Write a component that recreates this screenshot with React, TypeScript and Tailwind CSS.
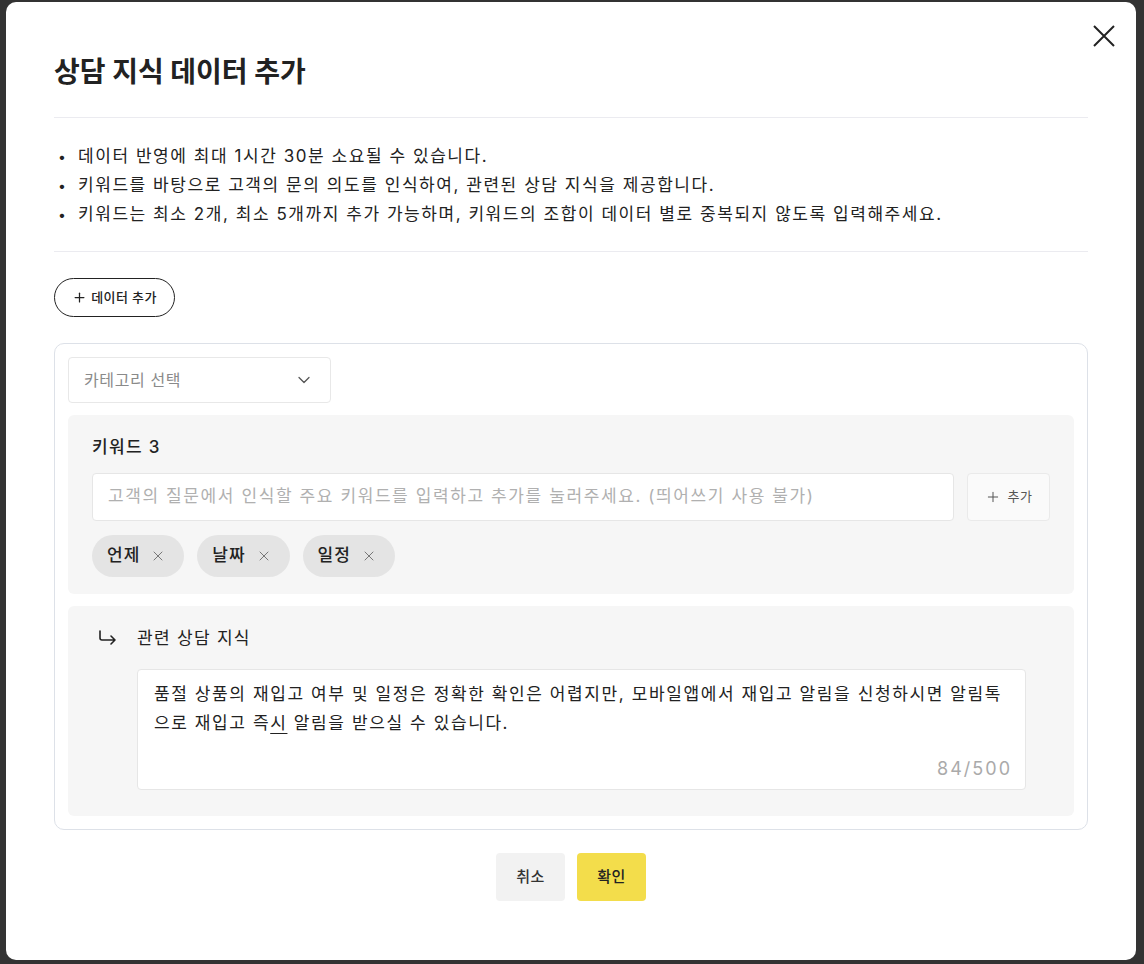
import { Plus, ChevronDown, X } from "lucide-react";

const font = { fontFamily: "Inter, 'Noto Sans CJK KR', sans-serif" };

export default function App() {
  const keywords = ["언제", "날짜", "일정"];

  return (
    <div className="w-[1144px] h-[964px] bg-[#333333] pt-[2px] pl-[6px] overflow-hidden" style={font}>
      <div className="relative w-[1130px] h-[958px] bg-white rounded-[10px] px-[48px] text-[#222222]">
        {/* close */}
        <button className="absolute top-[23px] right-[21px] w-[22px] h-[22px]">
          <svg viewBox="0 0 22 22" className="w-[22px] h-[22px]">
            <path d="M1 1 L21 21 M21 1 L1 21" stroke="#222" strokeWidth="2" fill="none" />
          </svg>
        </button>

        {/* header */}
        <h1 className="pt-[53px] text-[28px] leading-[34px] font-bold">
          상담 지식 데이터 추가
        </h1>
        <div className="mt-[28px] h-px bg-[#ebebf0]" />

        {/* notice */}
        <ul className="mt-[24px] text-[17px] leading-[29px] tracking-[1.55px] text-[#222]">
          <li className="flex">
            <span className="w-[24px] pl-[4px] text-[14px] tracking-normal">•</span>
            데이터 반영에 최대 1시간 30분 소요될 수 있습니다.
          </li>
          <li className="flex">
            <span className="w-[24px] pl-[4px] text-[14px] tracking-normal">•</span>
            키워드를 바탕으로 고객의 문의 의도를 인식하여, 관련된 상담 지식을 제공합니다.
          </li>
          <li className="flex">
            <span className="w-[24px] pl-[4px] text-[14px] tracking-normal">•</span>
            키워드는 최소 2개, 최소 5개까지 추가 가능하며, 키워드의 조합이 데이터 별로 중복되지 않도록 입력해주세요.
          </li>
        </ul>
        <div className="mt-[22px] h-px bg-[#ebebf0]" />

        {/* add data */}
        <button className="mt-[26px] h-[39px] w-[121px] flex items-center justify-center gap-[4px] rounded-full border-[1.5px] border-[#222] text-[13px] tracking-[0.4px] font-medium">
          <Plus size={15} strokeWidth={2} />
          데이터 추가
        </button>

        {/* card */}
        <div className="mt-[26px] border border-[#dde1e8] rounded-[10px] p-[13px] flex flex-col gap-[12px]">
          <div className="w-[263px] h-[46px] border border-[#e8e8e8] rounded-[4px] flex items-center justify-between pl-[15px] pr-[16px]">
            <span className="text-[16px] tracking-[0.6px] text-[#8a8a8a]">카테고리 선택</span>
            <ChevronDown size={20} strokeWidth={1.5} className="text-[#555]" />
          </div>

          {/* keywords */}
          <div className="bg-[#f6f6f6] rounded-[6px] pt-[20px] pb-[17px] px-[24px]">
            <div className="text-[17px] leading-[24px] tracking-[1.3px] font-medium">키워드 3</div>
            <div className="mt-[14px] flex gap-[13px]">
              <div className="flex-1 h-[48px] bg-white border border-[#e6e6e6] rounded-[4px] flex items-center px-[15px] text-[17px] tracking-[1.6px] text-[#b0b0b0] whitespace-nowrap overflow-hidden">
                고객의 질문에서 인식할 주요 키워드를 입력하고 추가를 눌러주세요. (띄어쓰기 사용 불가)
              </div>
              <button className="w-[83px] h-[48px] bg-[#fafafa] border border-[#eaeaea] rounded-[4px] flex items-center justify-center gap-[7px] text-[13px] tracking-[0.5px] text-[#555]">
                <Plus size={16} strokeWidth={1.5} />
                추가
              </button>
            </div>
            <div className="mt-[14px] flex gap-[13px]">
              {keywords.map((k) => (
                <div
                  key={k}
                  className="h-[42px] pl-[15px] pr-[18px] rounded-full bg-[#e4e4e4] flex items-center gap-[10px] text-[17px] tracking-[1px] font-medium"
                >
                  {k}
                  <X size={16} strokeWidth={1.5} className="text-[#777]" />
                </div>
              ))}
            </div>
          </div>

          {/* related */}
          <div className="bg-[#f6f6f6] rounded-[6px] pt-[20px] pb-[26px] pl-[30px] pr-[48px]">
            <div className="flex items-center text-[17px] leading-[24px] tracking-[1.3px]">
              <svg viewBox="0 0 20 16" className="w-[20px] h-[16px] mr-[19px]">
                <path d="M2 1 V8 Q2 10 4 10 H17 M13 6 L17 10 L13 14" stroke="#222" strokeWidth="1.6" fill="none" strokeLinecap="round" strokeLinejoin="round" />
              </svg>
              관련 상담 지식
            </div>
            <div className="relative ml-[39px] mt-[19px] h-[121px] bg-white border border-[#e6e6e6] rounded-[4px] pl-[16px] pr-[10px] pt-[10px] text-[17px] leading-[29px] tracking-[1.6px] whitespace-nowrap">
              품절 상품의 재입고 여부 및 일정은 정확한 확인은 어렵지만, 모바일앱에서 재입고 알림을 신청하시면 알림톡
              <br />
              으로 재입고 즉<span className="underline underline-offset-[4px]">시</span> 알림을 받으실 수 있습니다.
              <span className="absolute right-[13px] bottom-[6px] text-[18px] tracking-[2px] text-[#aaa]">84/500</span>
            </div>
          </div>
        </div>

        {/* footer */}
        <div className="mt-[23px] flex justify-center gap-[12px]">
          <button className="w-[69px] h-[48px] rounded-[4px] bg-[#f2f2f2] text-[15px] tracking-[0.5px] font-medium text-[#333]">취소</button>
          <button className="w-[69px] h-[48px] rounded-[4px] bg-[#f3dd4b] text-[15px] tracking-[0.5px] font-medium text-[#222]">확인</button>
        </div>
      </div>
    </div>
  );
}
